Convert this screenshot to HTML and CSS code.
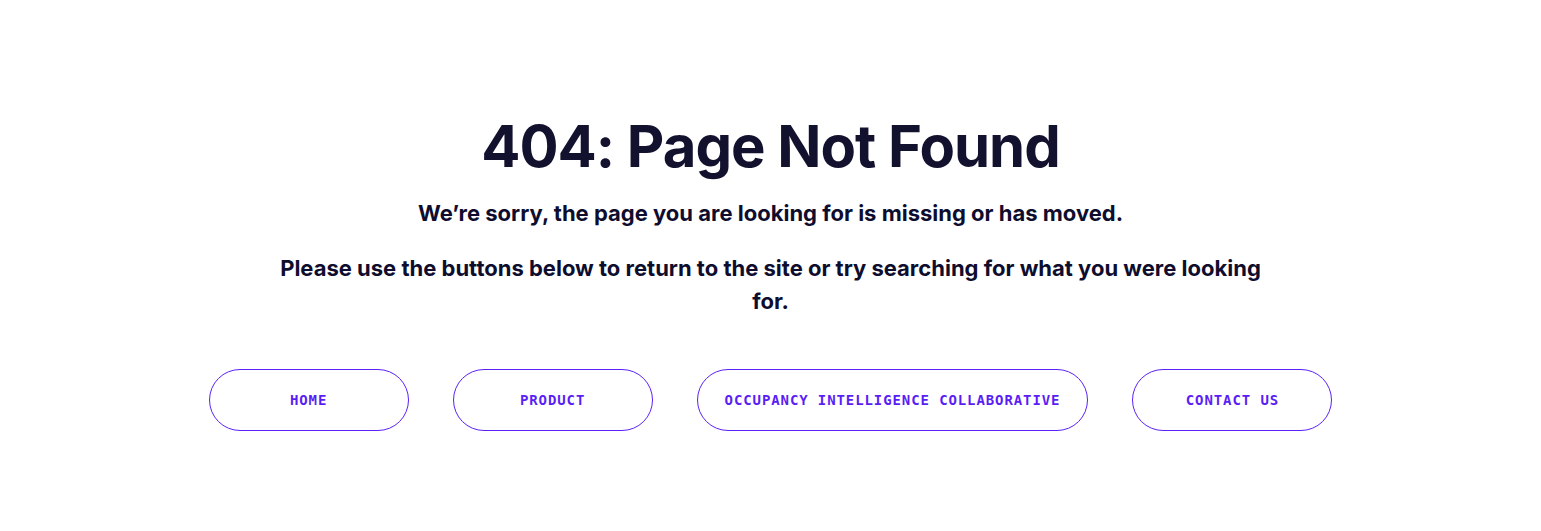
FILE: index.html
```html
<!DOCTYPE html>
<html lang="en">
<head>
<meta charset="utf-8">
<title>404: Page Not Found</title>
<link rel="stylesheet" href="styles.css">
</head>
<body>
<main class="notfound">
  <h1 class="title">404: Page Not Found</h1>
  <p class="lead">We’re sorry, the page you are looking for is missing or has moved.</p>
  <p class="lead lead-wide">Please use the buttons below to return to the site or try searching for what you were looking for.</p>
  <nav class="actions">
    <a class="btn" href="#">HOME</a>
    <a class="btn" href="#">PRODUCT</a>
    <a class="btn" href="#">OCCUPANCY INTELLIGENCE COLLABORATIVE</a>
    <a class="btn" href="#">CONTACT US</a>
  </nav>
</main>
</body>
</html>
```
FILE: styles.css
```css
html, body {
  margin: 0;
  padding: 0;
  background: #ffffff;
}
body {
  font-family: "Inter", "Liberation Sans", sans-serif;
  color: #12112e;
}
.notfound {
  display: flex;
  flex-direction: column;
  align-items: center;
  padding-top: 111px;
}
.title {
  margin: 0;
  font-size: 58px;
  line-height: 70px;
  font-weight: 700;
  letter-spacing: -1px;
  color: #12112e;
}
.lead {
  margin: 16px 0 0;
  max-width: 1000px;
  text-align: center;
  font-size: 22px;
  line-height: 33px;
  font-weight: 700;
  color: #0e0d2e;
}
.lead-wide {
  margin-top: 22px;
}
.actions {
  display: flex;
  gap: 44px;
  margin-top: 51px;
}
.btn {
  box-sizing: border-box;
  display: flex;
  align-items: center;
  justify-content: center;
  min-width: 200px;
  height: 62px;
  padding: 0 27px;
  border: 1px solid #5b21f5;
  border-radius: 31px;
  font-family: "DejaVu Sans Mono", "Liberation Mono", monospace;
  font-weight: 700;
  font-size: 14px;
  letter-spacing: 0.9px;
  color: #5a1ef5;
  text-decoration: none;
}
```
